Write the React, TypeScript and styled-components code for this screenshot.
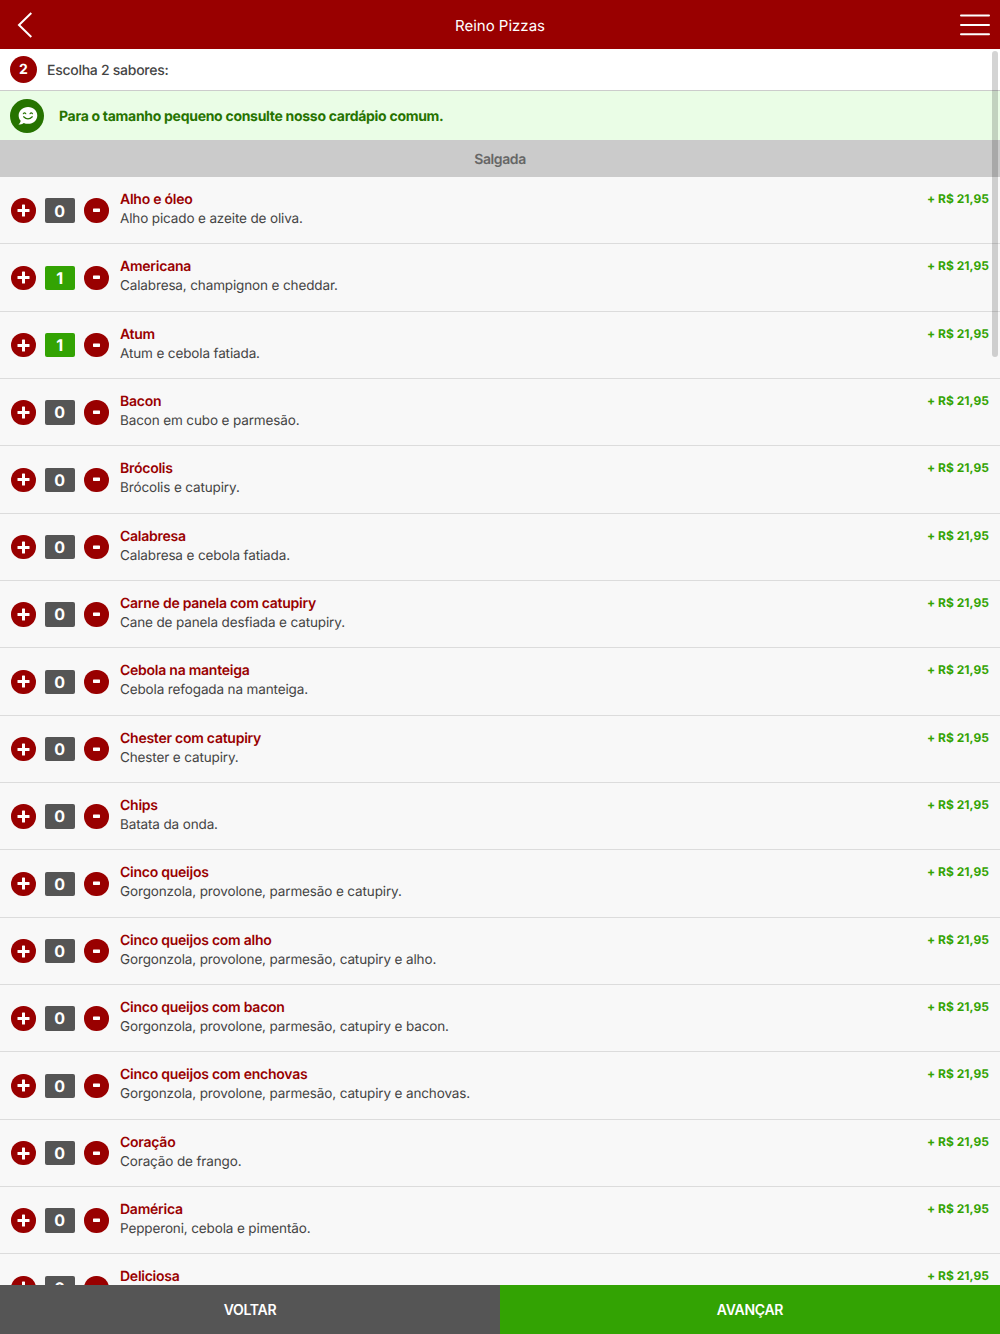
import React from "react";
import styled, { createGlobalStyle } from "styled-components";

const Global = createGlobalStyle`
  html, body { margin: 0; padding: 0; background: #fff; }
  body { font-family: Inter, "Liberation Sans", sans-serif; -webkit-font-smoothing: antialiased; text-rendering: geometricPrecision; }
  * { box-sizing: border-box; }
`;

const Page = styled.div`
  position: relative;
  width: 1000px;
  height: 1334px;
  display: flex;
  flex-direction: column;
  overflow: hidden;
`;

const Header = styled.header`
  position: relative;
  flex: none;
  height: 49px;
  background: #990000;
  display: flex;
  align-items: center;
  justify-content: space-between;
  padding: 0 10px 0 17px;
  color: #fff;
`;

const Title = styled.h1`
  margin: 0;
  font-size: 15px;
  font-weight: 400;
  line-height: 20px;
  position: absolute;
  left: 0;
  right: 0;
  top: 16px;
  text-align: center;
`;

const Content = styled.main`
  flex: 1;
  min-height: 0;
  overflow: hidden;
`;

const StepBar = styled.div`
  height: 42px;
  background: #fff;
  border-bottom: 1px solid #cccccc;
  display: flex;
  align-items: center;
  gap: 10px;
  padding: 0 0 1px 10px;
`;

const StepBadge = styled.div`
  width: 27px;
  height: 27px;
  border-radius: 50%;
  background: #990000;
  color: #fff;
  font-size: 14px;
  font-weight: 700;
  display: flex;
  align-items: center;
  justify-content: center;
`;

const StepText = styled.span`
  padding-top: 2px;
  font-size: 14px;
  font-weight: 500;
  color: #444;
  letter-spacing: -0.27px;
`;

const Notice = styled.div`
  height: 49px;
  background: #eafde6;
  display: flex;
  align-items: center;
  gap: 15px;
  padding: 0 0 0 10px;
`;

const NoticeIcon = styled.div`
  width: 34px;
  height: 34px;
  border-radius: 50%;
  background: #267300;
  display: flex;
  align-items: center;
  justify-content: center;
`;

const NoticeText = styled.span`
  padding-top: 2px;
  font-size: 14px;
  font-weight: 700;
  color: #267300;
  letter-spacing: -0.29px;
`;

const SectionTitle = styled.div`
  height: 37px;
  padding-top: 2px;
  background: #cbcbcb;
  color: #666;
  font-size: 14px;
  font-weight: 600;
  display: flex;
  align-items: center;
  justify-content: center;
  letter-spacing: -0.4px;
`;

const Row = styled.div`
  height: 67.33px;
  background: #f8f8f8;
  border-bottom: 1px solid #dcdcdc;
  display: flex;
  align-items: flex-start;
  padding: 0 11px;
`;

const Controls = styled.div`
  flex: none;
  display: flex;
  align-items: center;
  height: 67px;
  margin-right: 11.5px;
`;

const RoundButton = styled.button`
  width: 24.5px;
  height: 24.5px;
  padding: 0;
  border: 0;
  border-radius: 50%;
  background: #990000;
  display: flex;
  align-items: center;
  justify-content: center;
`;

const Count = styled.div<{ $active: boolean }>`
  width: 29.5px;
  height: 24.5px;
  margin: 0 9.5px;
  border-radius: 2px;
  background: ${(p) => (p.$active ? "#33a303" : "#555555")};
  color: #fff;
  font-size: 16px;
  font-weight: 700;
  display: flex;
  align-items: center;
  justify-content: center;
`;

const Info = styled.div`
  flex: 1;
  min-width: 0;
  padding-top: 13px;
`;

const Name = styled.div`
  font-size: 14px;
  line-height: 19px;
  font-weight: 600;
  color: #990000;
  letter-spacing: -0.25px;
`;

const Description = styled.div`
  font-size: 13.5px;
  line-height: 20px;
  color: #444;
  letter-spacing: -0.13px;
`;

const Price = styled.div`
  flex: none;
  padding-top: 14px;
  font-size: 12px;
  line-height: 16px;
  font-weight: 700;
  color: #33a303;
  letter-spacing: 0.05px;
`;

const Footer = styled.footer`
  position: relative;
  flex: none;
  height: 49px;
  display: flex;
`;

const FooterButton = styled.button<{ $primary?: boolean }>`
  flex: 1;
  border: 0;
  padding: 0;
  background: ${(p) => (p.$primary ? "#33a303" : "#555555")};
  color: #fff;
  font-family: inherit;
  font-size: 14px;
  font-weight: 600;
  letter-spacing: -0.3px;
`;

const ScrollThumb = styled.div`
  position: absolute;
  top: 51px;
  left: 992px;
  width: 6px;
  height: 306px;
  border-radius: 3px;
  background: rgba(0, 0, 0, 0.17);
`;

const items: [string, string, number?][] = [
  ["Alho e óleo", "Alho picado e azeite de oliva."],
  ["Americana", "Calabresa, champignon e cheddar.", 1],
  ["Atum", "Atum e cebola fatiada.", 1],
  ["Bacon", "Bacon em cubo e parmesão."],
  ["Brócolis", "Brócolis e catupiry."],
  ["Calabresa", "Calabresa e cebola fatiada."],
  ["Carne de panela com catupiry", "Cane de panela desfiada e catupiry."],
  ["Cebola na manteiga", "Cebola refogada na manteiga."],
  ["Chester com catupiry", "Chester e catupiry."],
  ["Chips", "Batata da onda."],
  ["Cinco queijos", "Gorgonzola, provolone, parmesão e catupiry."],
  ["Cinco queijos com alho", "Gorgonzola, provolone, parmesão, catupiry e alho."],
  ["Cinco queijos com bacon", "Gorgonzola, provolone, parmesão, catupiry e bacon."],
  ["Cinco queijos com enchovas", "Gorgonzola, provolone, parmesão, catupiry e anchovas."],
  ["Coração", "Coração de frango."],
  ["Damérica", "Pepperoni, cebola e pimentão."],
  ["Deliciosa", ""],
];

const Back = () => (
  <svg width="16" height="26" viewBox="0 0 16 26" fill="none" stroke="#fff" strokeWidth="2">
    <path d="M14.3 1 L2 13 L14.3 25" />
  </svg>
);

const Menu = () => (
  <svg width="30" height="22" viewBox="0 0 30 22" fill="#fff">
    <rect y="0.5" width="30" height="2" rx="1" />
    <rect y="10" width="30" height="2" rx="1" />
    <rect y="19.2" width="30" height="2" rx="1" />
  </svg>
);

const Plus = () => (
  <svg width="13" height="13" viewBox="0 0 13 13" fill="#fff">
    <rect x="5" y="0.5" width="3" height="12" rx="0.6" />
    <rect x="0.5" y="5" width="12" height="3" rx="0.6" />
  </svg>
);

const Minus = () => (
  <svg width="7" height="5" viewBox="0 0 7 5" fill="#fff">
    <rect x="0" y="0.5" width="7" height="3.4" rx="0.6" />
  </svg>
);

const Chat = () => (
  <svg width="25" height="24" viewBox="0 0 22 21">
    <path
      d="M11.5 2.5 C6.8 2.5 3.2 5.8 3.2 10 C3.2 11.8 3.9 13.4 5 14.7 C4.9 16 4.1 17.2 3 18 C4.9 18 6.5 17.4 7.7 16.6 C8.9 17.1 10.1 17.4 11.5 17.4 C16.2 17.4 19.6 14.2 19.6 10 C19.6 5.8 16.2 2.5 11.5 2.5 Z"
      fill="#fff"
    />
    <path d="M7.3 8.5 Q8.4 7 9.5 8.5 M13.2 8.5 Q14.3 7 15.4 8.5" stroke="#267300" strokeWidth="1" fill="none" strokeLinecap="round" />
    <path d="M7.6 11.2 Q11.4 15 15.2 11.2" stroke="#267300" strokeWidth="1.1" fill="none" strokeLinecap="round" />
  </svg>
);

export default function App() {
  return (
    <Page>
      <Global />
      <Header>
        <Back />
        <Title>Reino Pizzas</Title>
        <Menu />
      </Header>
      <Content>
        <StepBar>
          <StepBadge>2</StepBadge>
          <StepText>Escolha 2 sabores:</StepText>
        </StepBar>
        <Notice>
          <NoticeIcon>
            <Chat />
          </NoticeIcon>
          <NoticeText>Para o tamanho pequeno consulte nosso cardápio comum.</NoticeText>
        </Notice>
        <SectionTitle>Salgada</SectionTitle>
        {items.map(([name, desc, count]) => (
          <Row key={name}>
            <Controls>
              <RoundButton aria-label="Adicionar">
                <Plus />
              </RoundButton>
              <Count $active={!!count}>{count ?? 0}</Count>
              <RoundButton aria-label="Remover">
                <Minus />
              </RoundButton>
            </Controls>
            <Info>
              <Name>{name}</Name>
              {desc && <Description>{desc}</Description>}
            </Info>
            <Price>+ R$ 21,95</Price>
          </Row>
        ))}
      </Content>
      <Footer>
        <FooterButton>VOLTAR</FooterButton>
        <FooterButton $primary>AVANÇAR</FooterButton>
      </Footer>
      <ScrollThumb />
    </Page>
  );
}
